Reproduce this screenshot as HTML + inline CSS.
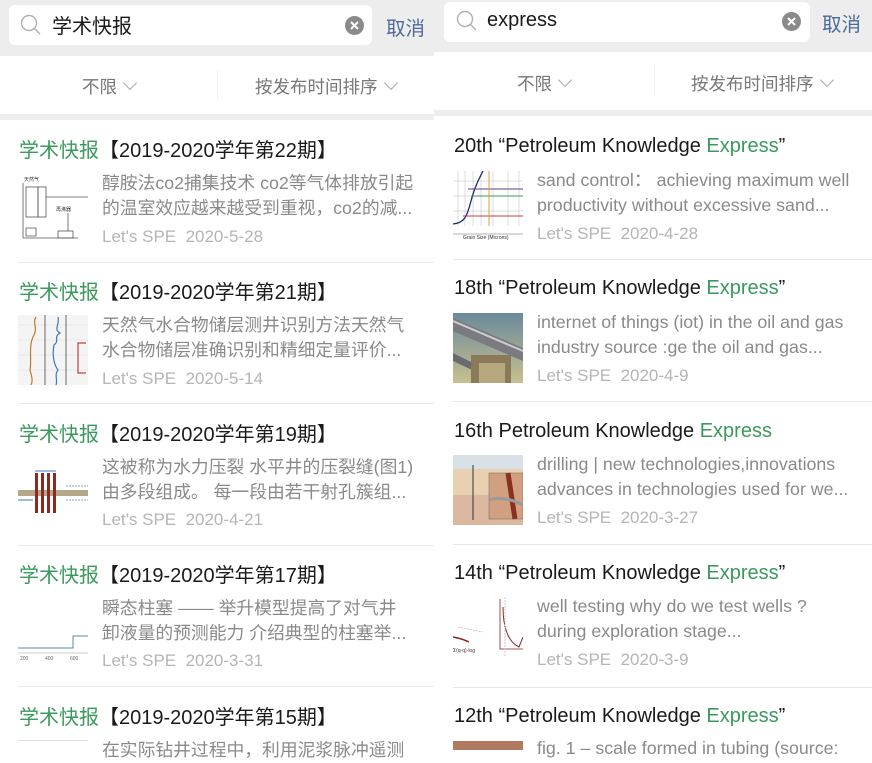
<!DOCTYPE html>
<html><head><meta charset="utf-8"><style>
*{margin:0;padding:0;box-sizing:border-box}
body{width:872px;height:750px;overflow:hidden;background:#fff;font-family:"Liberation Sans","Noto Sans CJK SC",sans-serif;position:relative}
.a{position:absolute;white-space:nowrap}
.g{color:#3a9a5c}
.t{font-size:20px;color:#1a1a1a}
.d{font-size:17.8px;color:#8a8a8a;line-height:24.5px}
.m{font-size:17px;color:#b5b5b5}
.hr{position:absolute;height:1px;background:#e8e8e8}
.f{font-size:17.5px;color:#777}
.chev{display:inline-block;width:10px;height:10px;border-right:1px solid #aaa;border-bottom:1px solid #aaa;transform:rotate(45deg);margin-left:8px;position:relative;top:-5px}
.th{position:absolute;width:70px;height:70px;overflow:hidden}
</style></head><body>
<!-- LEFT PANEL -->
<div class="a" style="left:0;top:0;width:434px;height:56px;background:#ededed"></div>
<div class="a" style="left:9px;top:5px;width:363px;height:40px;background:#fff;border-radius:6px"></div>
<svg class="a" style="left:20px;top:14px" width="22" height="22"><circle cx="9" cy="9" r="7.5" fill="none" stroke="#b0b0b0" stroke-width="1.4"/><line x1="14.5" y1="14.5" x2="20" y2="20" stroke="#b0b0b0" stroke-width="1.4"/></svg>
<div class="a" style="left:52px;top:10px;font-size:20px;color:#1a1a1a">学术快报</div>
<svg class="a" style="left:345px;top:16px" width="19" height="19"><circle cx="9.5" cy="9.5" r="9.5" fill="#8a8a8a"/><path d="M6 6L13 13M13 6L6 13" stroke="#fff" stroke-width="2"/></svg>
<div class="a" style="left:386px;top:12px;font-size:19.5px;color:#4d6a9a">取消</div>
<div class="a" style="left:0;top:56px;width:434px;height:58px;background:#fff"></div>
<div class="a" style="left:217px;top:70px;width:1px;height:30px;background:#f0f0f0"></div>
<div class="a f" style="left:82px;top:74px">不限<span class="chev"></span></div>
<div class="a f" style="left:255px;top:74px">按发布时间排序<span class="chev"></span></div>
<div class="a" style="left:0;top:114px;width:434px;height:6px;background:#ededed"></div>

<!-- left items -->
<div class="a t" style="left:19px;top:134px"><span class="g">学术快报</span>【2019-2020学年第22期】</div>
<svg class="th" style="left:18px;top:173px" viewBox="0 0 70 70"><rect width="70" height="70" fill="#fff"/><g stroke="#555" fill="none" stroke-width="0.8"><rect x="8" y="14" width="12" height="30"/><rect x="20" y="14" width="8" height="30"/><line x1="28" y1="24" x2="70" y2="24"/><line x1="5" y1="10" x2="5" y2="65"/><line x1="5" y1="65" x2="60" y2="65"/><rect x="40" y="58" width="15" height="7"/><path d="M8 55h10v8H8z"/><line x1="50" y1="40" x2="50" y2="58"/></g><text x="6" y="8" font-size="5" fill="#333">天然气</text><text x="38" y="38" font-size="5" fill="#333">再沸器</text></svg>
<div class="a d" style="left:102px;top:171px">醇胺法co2捕集技术 co2等气体排放引起<br>的温室效应越来越受到重视，co2的减...</div>
<div class="a m" style="left:102px;top:227px">Let's SPE&nbsp; 2020-5-28</div>
<div class="hr" style="left:18px;top:262px;width:416px"></div>

<div class="a t" style="left:19px;top:276px"><span class="g">学术快报</span>【2019-2020学年第21期】</div>
<svg class="th" style="left:18px;top:315px" viewBox="0 0 70 70"><rect width="70" height="70" fill="#f4f4f4"/><g stroke="#ddd" stroke-width="0.5"><line x1="0" y1="10" x2="70" y2="10"/><line x1="0" y1="25" x2="70" y2="25"/><line x1="0" y1="40" x2="70" y2="40"/><line x1="0" y1="55" x2="70" y2="55"/></g><g stroke="#444" stroke-width="0.8"><line x1="27" y1="0" x2="27" y2="70"/><line x1="48" y1="0" x2="48" y2="70"/></g><path d="M18 2C14 8 20 12 16 20C10 30 14 45 12 55C14 62 15 66 13 70" stroke="#c07830" fill="none" stroke-width="1.2"/><path d="M40 2C42 10 35 14 42 18C35 22 42 26 36 30C34 40 36 50 40 55C36 60 40 65 38 70" stroke="#3a7ac0" fill="none" stroke-width="1.2"/><path d="M68 28H60V58H68" stroke="#c04040" fill="none" stroke-width="1.2"/></svg>
<div class="a d" style="left:102px;top:313px">天然气水合物储层测井识别方法天然气<br>水合物储层准确识别和精细定量评价...</div>
<div class="a m" style="left:102px;top:369px">Let's SPE&nbsp; 2020-5-14</div>
<div class="hr" style="left:18px;top:403px;width:416px"></div>

<div class="a t" style="left:19px;top:418px"><span class="g">学术快报</span>【2019-2020学年第19期】</div>
<svg class="th" style="left:18px;top:457px" viewBox="0 0 70 70"><rect width="70" height="70" fill="#fff"/><rect x="0" y="33" width="70" height="6" fill="#b5a889"/><g fill="#8a2a20"><rect x="17" y="16" width="3" height="40"/><rect x="23" y="16" width="3" height="40"/><rect x="29" y="16" width="3" height="40"/><rect x="35" y="16" width="3" height="40"/></g><path d="M17 14h21" stroke="#3a7ac0"/><line x1="48" y1="29" x2="70" y2="29" stroke="#7ab" stroke-dasharray="2 1"/><line x1="48" y1="43" x2="70" y2="43" stroke="#7ab" stroke-dasharray="2 1"/><line x1="0" y1="43" x2="15" y2="43" stroke="#3a7ac0"/></svg>
<div class="a d" style="left:102px;top:455px">这被称为水力压裂 水平井的压裂缝(图1)<br>由多段组成。 每一段由若干射孔簇组...</div>
<div class="a m" style="left:102px;top:510px">Let's SPE&nbsp; 2020-4-21</div>
<div class="hr" style="left:18px;top:545px;width:416px"></div>

<div class="a t" style="left:19px;top:559px"><span class="g">学术快报</span>【2019-2020学年第17期】</div>
<svg class="th" style="left:18px;top:598px" viewBox="0 0 70 70"><rect width="70" height="70" fill="#fff"/><path d="M0 50H55V38H70" stroke="#5a8aa0" fill="none" stroke-width="1"/><line x1="0" y1="55" x2="70" y2="55" stroke="#999" stroke-width="0.5"/><text x="2" y="62" font-size="5" fill="#666">200</text><text x="27" y="62" font-size="5" fill="#666">400</text><text x="52" y="62" font-size="5" fill="#666">600</text></svg>
<div class="a d" style="left:102px;top:596px">瞬态柱塞 —— 举升模型提高了对气井<br>卸液量的预测能力 介绍典型的柱塞举...</div>
<div class="a m" style="left:102px;top:651px">Let's SPE&nbsp; 2020-3-31</div>
<div class="hr" style="left:18px;top:686px;width:416px"></div>

<div class="a t" style="left:19px;top:701px"><span class="g">学术快报</span>【2019-2020学年第15期】</div>
<div class="a d" style="left:102px;top:738px">在实际钻井过程中，利用泥浆脉冲遥测</div>
<div class="a" style="left:18px;top:740px;width:70px;height:1px;background:#ddd"></div>

<!-- RIGHT PANEL -->
<div class="a" style="left:434px;top:0;width:438px;height:52px;background:#ededed"></div>
<div class="a" style="left:444px;top:2px;width:366px;height:40px;background:#fff;border-radius:6px"></div>
<svg class="a" style="left:456px;top:10px" width="22" height="22"><circle cx="9" cy="9" r="7.5" fill="none" stroke="#b0b0b0" stroke-width="1.4"/><line x1="14.5" y1="14.5" x2="20" y2="20" stroke="#b0b0b0" stroke-width="1.4"/></svg>
<div class="a" style="left:487px;top:9px;font-size:20px;color:#1a1a1a">express</div>
<svg class="a" style="left:782px;top:12px" width="19" height="19"><circle cx="9.5" cy="9.5" r="9.5" fill="#8a8a8a"/><path d="M6 6L13 13M13 6L6 13" stroke="#fff" stroke-width="2"/></svg>
<div class="a" style="left:822px;top:8px;font-size:19.5px;color:#4d6a9a">取消</div>
<div class="a" style="left:434px;top:52px;width:438px;height:58px;background:#fff"></div>
<div class="a" style="left:654px;top:66px;width:1px;height:30px;background:#f0f0f0"></div>
<div class="a f" style="left:517px;top:71px">不限<span class="chev"></span></div>
<div class="a f" style="left:691px;top:71px">按发布时间排序<span class="chev"></span></div>
<div class="a" style="left:434px;top:110px;width:438px;height:6px;background:#ededed"></div>

<div class="a t" style="left:454px;top:135px">20th “Petroleum Knowledge <span class="g">Express</span>”</div>
<svg class="th" style="left:453px;top:171px" viewBox="0 0 70 70"><rect width="70" height="70" fill="#fff"/><g stroke="#bbb" stroke-width="0.5"><line x1="5" y1="0" x2="5" y2="55"/><line x1="12" y1="0" x2="12" y2="55"/><line x1="20" y1="0" x2="20" y2="55"/><line x1="28" y1="0" x2="28" y2="55"/><line x1="40" y1="0" x2="40" y2="55"/><line x1="55" y1="0" x2="55" y2="55"/><line x1="66" y1="0" x2="66" y2="55"/><line x1="0" y1="10" x2="70" y2="10"/><line x1="0" y1="25" x2="70" y2="25"/><line x1="0" y1="40" x2="70" y2="40"/></g><path d="M0 53C12 52 14 45 18 30C22 15 26 8 30 0" stroke="#1a2a6a" fill="none" stroke-width="1.3"/><line x1="15" y1="18" x2="70" y2="18" stroke="#6a3a8a"/><line x1="18" y1="25" x2="70" y2="25" stroke="#3a9a5a"/><line x1="10" y1="45" x2="70" y2="45" stroke="#c04040"/><line x1="36" y1="0" x2="36" y2="55" stroke="#e0a030"/><line x1="0" y1="63" x2="70" y2="63" stroke="#666" stroke-width="0.5"/><text x="10" y="68" font-size="5" fill="#333">Grain Size (Microns)</text></svg>
<div class="a d" style="left:537px;top:168px">sand control：&nbsp;achieving maximum well<br>productivity without excessive sand...</div>
<div class="a m" style="left:537px;top:224px">Let's SPE&nbsp; 2020-4-28</div>
<div class="hr" style="left:453px;top:259px;width:419px"></div>

<div class="a t" style="left:454px;top:277px">18th “Petroleum Knowledge <span class="g">Express</span>”</div>
<svg class="th" style="left:453px;top:313px" viewBox="0 0 70 70"><defs><linearGradient id="sk" x1="0" y1="0" x2="0" y2="1"><stop offset="0" stop-color="#6a8a9a"/><stop offset="1" stop-color="#c8c090"/></linearGradient></defs><rect width="70" height="70" fill="url(#sk)"/><path d="M0 5L70 35L70 48L0 18Z" fill="#7a7a80"/><path d="M0 8L70 38" stroke="#ccc" stroke-width="2"/><path d="M0 40L30 55L30 62L0 48Z" fill="#6a6a70"/><rect x="18" y="42" width="40" height="28" fill="#8a7a5a"/><rect x="26" y="50" width="26" height="20" fill="#b8a880"/></svg>
<div class="a d" style="left:537px;top:310px">internet of things (iot) in the oil and gas<br>industry source :ge the oil and gas...</div>
<div class="a m" style="left:537px;top:366px">Let's SPE&nbsp; 2020-4-9</div>
<div class="hr" style="left:453px;top:401px;width:419px"></div>

<div class="a t" style="left:454px;top:420px">16th Petroleum Knowledge <span class="g">Express</span></div>
<svg class="th" style="left:453px;top:455px" viewBox="0 0 70 70"><rect width="70" height="70" fill="#e8d0b0"/><rect width="70" height="14" fill="#d8e0e8"/><rect y="40" width="70" height="30" fill="#dcb8a0"/><line x1="20" y1="10" x2="20" y2="65" stroke="#333" stroke-width="1"/><rect x="36" y="18" width="34" height="46" fill="#d0a080" stroke="#666" stroke-width="0.5"/><path d="M55 18L62 64" stroke="#8a3020" stroke-width="5"/><path d="M36 45Q50 40 70 50" stroke="#999" stroke-width="3" fill="none"/></svg>
<div class="a d" style="left:537px;top:452px">drilling | new technologies,innovations<br>advances in technologies used for we...</div>
<div class="a m" style="left:537px;top:508px">Let's SPE&nbsp; 2020-3-27</div>
<div class="hr" style="left:453px;top:544px;width:419px"></div>

<div class="a t" style="left:454px;top:562px">14th “Petroleum Knowledge <span class="g">Express</span>”</div>
<svg class="th" style="left:453px;top:597px" viewBox="0 0 70 70"><rect width="70" height="70" fill="#fff"/><path d="M0 40Q10 42 16 45" stroke="#8a2020" stroke-width="1.5" fill="none"/><line x1="5" y1="30" x2="30" y2="35" stroke="#999" stroke-width="0.5" stroke-dasharray="2 1"/><path d="M47 2V52H70" stroke="#8a2020" fill="none" stroke-width="0.8"/><path d="M50 10C50 30 55 45 66 50L70 40" stroke="#8a2020" fill="none" stroke-width="1"/><line x1="52" y1="0" x2="52" y2="60" stroke="#ccc" stroke-dasharray="2 1"/><text x="0" y="55" font-size="5" fill="#333">Σ(q-q)·log</text></svg>
<div class="a d" style="left:537px;top:594px">well testing why do we test wells ?<br>during exploration stage...</div>
<div class="a m" style="left:537px;top:650px">Let's SPE&nbsp; 2020-3-9</div>
<div class="hr" style="left:453px;top:687px;width:419px"></div>

<div class="a t" style="left:454px;top:705px">12th “Petroleum Knowledge <span class="g">Express</span>”</div>
<div class="a" style="left:453px;top:741px;width:70px;height:9px;background:#b07a60"></div>
<div class="a d" style="left:537px;top:736px">fig. 1 – scale formed in tubing (source:</div>
</body></html>
